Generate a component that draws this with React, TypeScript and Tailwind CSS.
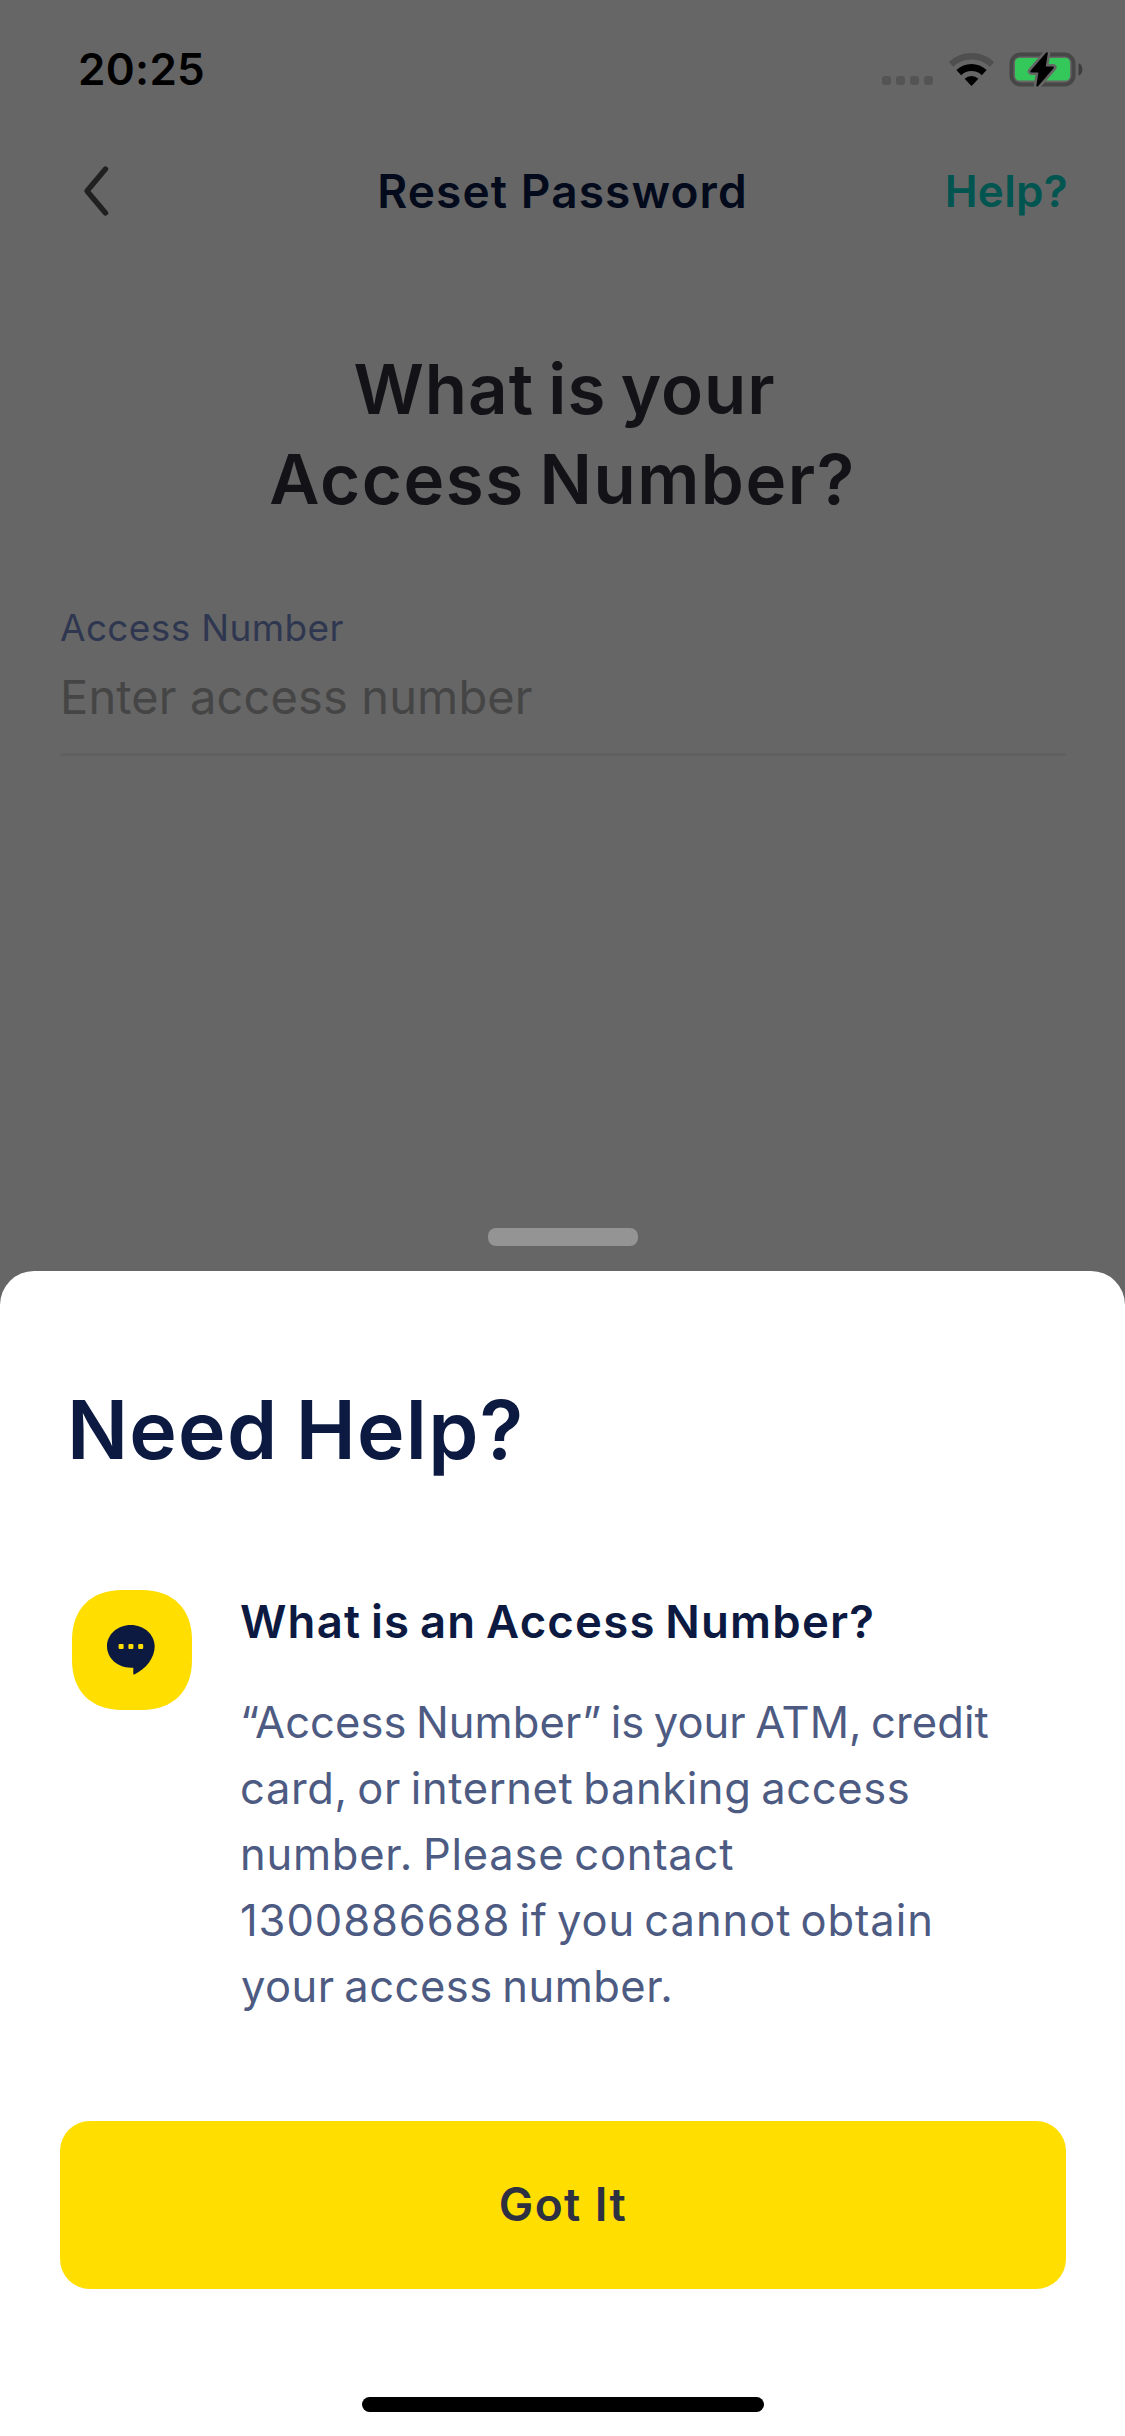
import type { ReactNode } from 'react';

function SignalDots() {
  return (
    <div className="mt-[23px] flex gap-[5px]">
      {[0, 1, 2, 3].map((i) => (
        <span key={i} className="size-[9px] rounded-[3px] bg-[#545454]" />
      ))}
    </div>
  );
}

function WifiIcon() {
  return (
    <svg className="ml-[16px] h-[33px] w-[45px]" viewBox="0 0 45 33" fill="none">
      <path d="M2 11.4A29.8 29.8 0 0 1 43 11.4" stroke="#4f4f4f" strokeWidth="6.4" />
      <path d="M9.8 19.6A18.5 18.5 0 0 1 35.2 19.6" stroke="#000" strokeWidth="7" />
      <path d="M22.5 33L15.6 25.7A10 10 0 0 1 29.4 25.7Z" fill="#000" />
    </svg>
  );
}

function BatteryIcon() {
  return (
    <svg className="ml-[15px] h-[38px] w-[74px]" viewBox="0 0 74 38" fill="none">
      <rect x="2.5" y="4.5" width="62" height="30" rx="9" stroke="#474747" strokeWidth="4" />
      <rect x="6" y="8" width="55" height="22.5" rx="4.5" fill="#34c759" />
      <path d="M69.5 13.2C72.2 14.3 73.4 16.7 73.4 19.5S72.2 24.7 69.5 25.8Z" fill="#3d3d3d" />
      <path
        d="M37.8 3.3L22.3 21.4H30.6L28.3 35.6L44 17.4H35.6Z"
        fill="#000"
        stroke="#666"
        strokeWidth="7"
        strokeLinejoin="round"
      />
      <path
        d="M37.8 3.3L22.3 21.4H30.6L28.3 35.6L44 17.4H35.6Z"
        fill="#000"
        stroke="#000"
        strokeWidth="2"
        strokeLinejoin="round"
      />
    </svg>
  );
}

function ChatBadge() {
  return (
    <svg className="size-[120px] shrink-0" viewBox="0 0 120 120">
      <path
        d="M0 50C0 19 19 0 50 0H70C101 0 120 19 120 50V70C120 101 101 120 70 120H50C19 120 0 101 0 70Z"
        fill="#ffde00"
      />
      <path
        d="M58.8 35C45.5 35 35 44.5 35 56.3S45.5 77.7 58.8 77.7H61.3V83.8Q61.3 84.8 62.4 84.4C74 79 82.7 68 82.7 56.3C82.7 44.5 72 35 58.8 35Z"
        fill="#0c1a42"
      />
      <rect x="46.6" y="54.1" width="5" height="5" rx="1" fill="#ffde00" />
      <rect x="56.4" y="54.1" width="5" height="5" rx="1" fill="#ffde00" />
      <rect x="66.2" y="54.1" width="5" height="5" rx="1" fill="#ffde00" />
    </svg>
  );
}

function Line({ className, children }: { className: string; children: ReactNode }) {
  return <span className={`block whitespace-nowrap ${className}`}>{children}</span>;
}

export default function App() {
  return (
    <div className="flex h-[2436px] w-[1125px] flex-col overflow-hidden bg-[#666] font-['Inter',sans-serif]">
      <div className="flex h-[1228px] flex-col">
        <div className="flex h-[138px] items-center justify-between pl-[78px] pr-[42px]">
          <span className="text-[44px] font-semibold leading-none tracking-[0.31px] text-black">20:25</span>
          <div className="flex items-center">
            <SignalDots />
            <WifiIcon />
            <BatteryIcon />
          </div>
        </div>

        <header className="grid h-[106px] grid-cols-[1fr_auto_1fr] items-center pl-[82px] pr-[57px]">
          <button aria-label="Back" className="w-[28px]">
            <svg className="h-[52px] w-[28px]" viewBox="0 0 28 52" fill="none">
              <path
                d="M23.5 4L5 26L23.5 48"
                stroke="#202020"
                strokeWidth="5.4"
                strokeLinecap="round"
                strokeLinejoin="round"
              />
            </svg>
          </button>
          <h1 className="-ml-[25px] text-[46px] font-semibold leading-none tracking-[1.1px] text-[#020a1c]">
            Reset Password
          </h1>
          <button className="justify-self-end text-[44px] font-semibold leading-none tracking-[0.32px] text-[#005550]">
            Help?
          </button>
        </header>

        <h2 className="mt-[100px] text-center text-[69px] font-semibold leading-[90px] text-[#121217] [word-spacing:-4px]">
          <Line className="pl-[4px] tracking-[0.98px]">What is your</Line>
          <Line className="tracking-[1.53px]">Access Number?</Line>
        </h2>

        <div className="ml-[60px] mr-[59px] mt-[79px] flex flex-col">
          <label className="text-[37px] leading-[50px] tracking-[0.35px] text-[#2f3750]">Access Number</label>
          <span className="mt-[14px] text-[47px] leading-[60px] tracking-[0.13px] text-[#454545]">
            Enter access number
          </span>
          <div className="mt-[26px] h-[3px] bg-[#606060]" />
        </div>
      </div>

      <div className="mx-auto h-[18px] w-[150px] shrink-0 rounded-lg bg-[#949494]" />

      <section className="mt-[25px] flex flex-1 flex-col rounded-t-[34px] bg-white">
        <h2 className="ml-[67px] mt-[109px] text-[80.5px] font-semibold leading-[100px] tracking-[1.2px] text-[#0c1a42] [word-spacing:-4px]">
          Need Help?
        </h2>

        <div className="ml-[72px] mt-[110px] flex">
          <ChatBadge />
          <div className="ml-[48px] mt-[2px]">
            <h3 className="text-[45.5px] font-semibold leading-[60px] tracking-[1.21px] text-[#0c1a42] [word-spacing:-3px]">
              What is an Access Number?
            </h3>
            <p className="mt-[37px] text-[43.5px] leading-[66px] text-[#4d5b83] [word-spacing:-3px]">
              <Line className="tracking-[0.09px]">“Access Number” is your ATM, credit</Line>
              <Line className="tracking-[0.6px]">card, or internet banking access</Line>
              <Line className="tracking-[0.75px]">number. Please contact</Line>
              <Line className="tracking-[0.92px] [word-spacing:-4px]">1300886688 if you cannot obtain</Line>
              <Line className="pl-px tracking-[0.47px]">your access number.</Line>
            </p>
          </div>
        </div>

        <button className="ml-[60px] mr-[59px] mt-[102px] h-[168px] rounded-[30px] bg-[#ffde00] pb-[2px] text-[46px] font-semibold leading-none tracking-[1.39px] text-[#2d3040]">
          Got It
        </button>

        <div className="mx-auto mt-[108px] h-[15px] w-[402px] rounded-full bg-black" />
      </section>
    </div>
  );
}
